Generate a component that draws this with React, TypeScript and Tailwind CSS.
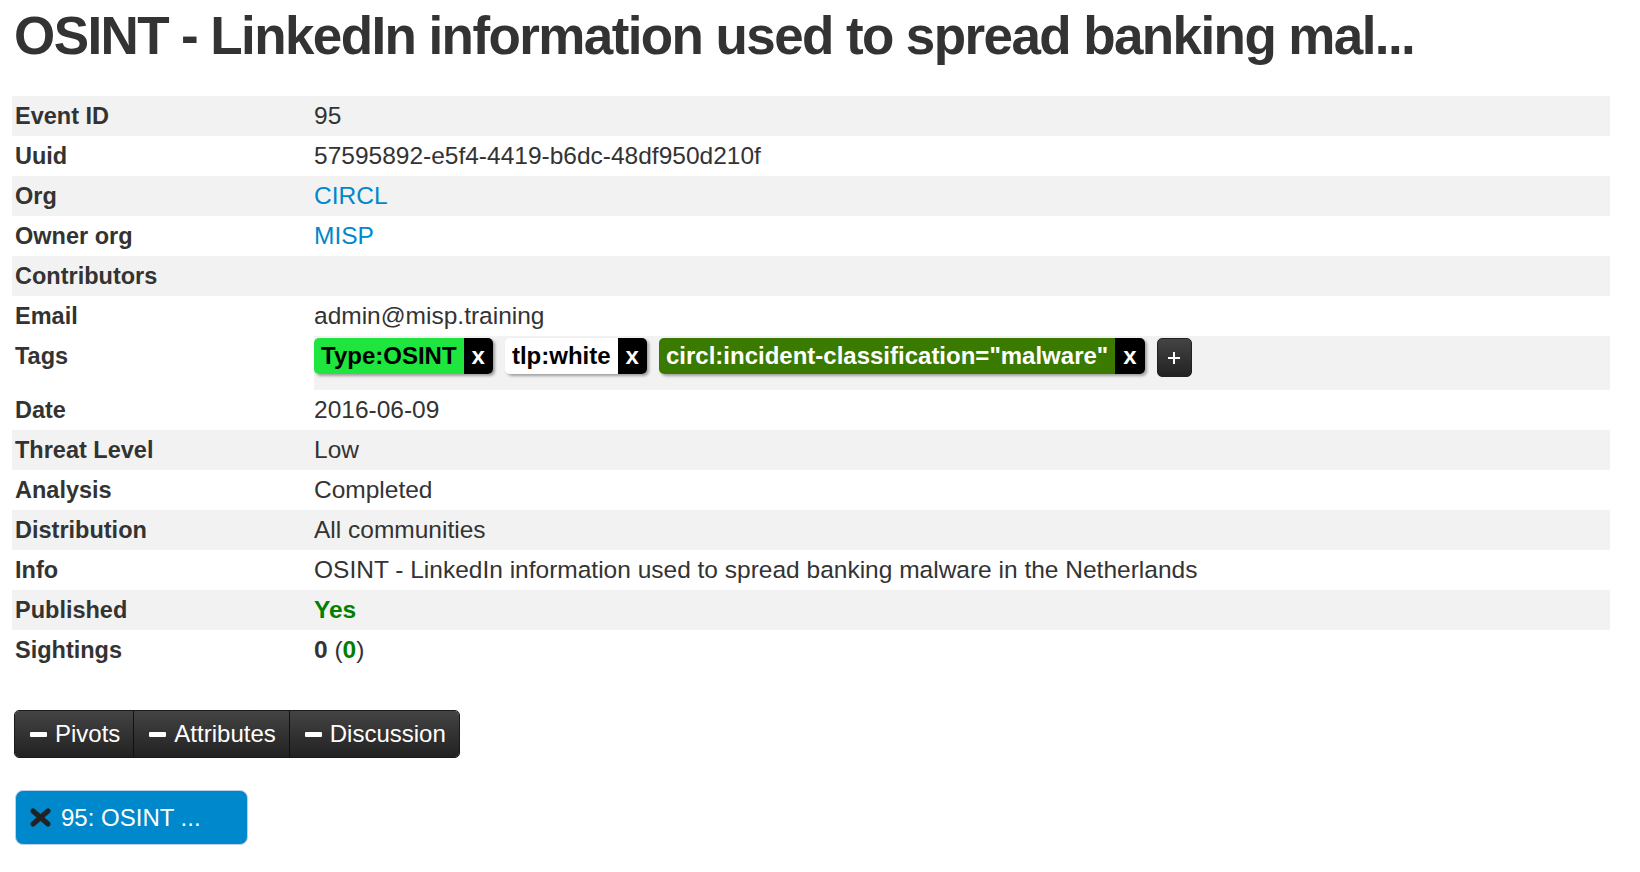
import React from "react";

const rows: { label: string; value: React.ReactNode }[] = [
  { label: "Event ID", value: "95" },
  { label: "Uuid", value: "57595892-e5f4-4419-b6dc-48df950d210f" },
  { label: "Org", value: <span className="text-[#0088cc]">CIRCL</span> },
  { label: "Owner org", value: <span className="text-[#0088cc]">MISP</span> },
  { label: "Contributors", value: "" },
  { label: "Email", value: "admin@misp.training" },
  { label: "Tags", value: null },
  { label: "Date", value: "2016-06-09" },
  { label: "Threat Level", value: "Low" },
  { label: "Analysis", value: "Completed" },
  { label: "Distribution", value: "All communities" },
  { label: "Info", value: "OSINT - LinkedIn information used to spread banking malware in the Netherlands" },
  { label: "Published", value: <span className="font-bold text-[#008000]">Yes</span> },
  {
    label: "Sightings",
    value: (
      <span>
        <span className="font-bold">0</span> (<span className="font-bold text-[#008000]">0</span>)
      </span>
    ),
  },
];

function Tag({ name, bg, fg }: { name: string; bg: string; fg: string }) {
  return (
    <span className="inline-flex h-[36px] rounded-[5px] shadow-[2px_2px_3px_rgba(0,0,0,0.35)] text-[24px] font-bold leading-[36px]">
      <span className={`px-[7px] rounded-l-[5px] ${bg} ${fg}`}>{name}</span>
      <span className="px-[8px] rounded-r-[5px] bg-black text-white">x</span>
    </span>
  );
}

function Tags() {
  return (
    <div className="flex items-start gap-[12px] pt-[2px] pb-[13px]">
      <Tag name="Type:OSINT" bg="bg-[#1fe63f]" fg="text-black" />
      <Tag name="tlp:white" bg="bg-white" fg="text-black" />
      <Tag name={'circl:incident-classification="malware"'} bg="bg-[#3a7a00]" fg="text-white" />
      <button className="flex h-[39px] w-[35px] items-center justify-center rounded-[5px] border border-[#222] bg-gradient-to-b from-[#444] to-[#222] text-white">
        <svg width="14" height="14" viewBox="0 0 14 14">
          <path d="M7 1v12M1 7h12" stroke="#fff" strokeWidth="2" />
        </svg>
      </button>
    </div>
  );
}

function Minus() {
  return <span className="inline-block h-[5px] w-[17px] rounded-[1px] bg-white" />;
}

export default function App() {
  return (
    <div className="min-h-[872px] bg-white px-3 font-['Liberation_Sans',Arial,sans-serif] text-[#333]">
      <h2 className="ml-[2px] pt-[9px] text-[53px] font-bold leading-[53px] tracking-[-1.6px] text-[#333]">
        OSINT - LinkedIn information used to spread banking mal...
      </h2>

      <div className="mt-[34px] w-[1598px]">
        {rows.map((r, i) => {
          const tags = r.label === "Tags";
          const stripe = i % 2 === 0 ? "bg-[#f2f2f2]" : "bg-white";
          return (
            <div key={r.label} className={`flex items-stretch ${tags ? "bg-white" : stripe}`}>
              <div className="w-[302px] shrink-0 pl-[3px] text-[23.5px] font-bold leading-[40px]">{r.label}</div>
              <div className={`flex-1 text-[24.5px] leading-[40px] ${tags ? stripe : ""}`}>
                {tags ? <Tags /> : r.value}
              </div>
            </div>
          );
        })}
      </div>

      <div className="ml-[2px] mt-[40px] inline-flex h-[48px] overflow-hidden rounded-[5px] border border-[#1a1a1a] text-[24px] text-white">
        <div className="flex items-center gap-[8px] bg-gradient-to-b from-[#444] to-[#222] pl-[15px] pr-[13px]">
          <Minus />
          Pivots
        </div>
        <div className="flex items-center gap-[8px] border-l border-[#111] bg-gradient-to-b from-[#444] to-[#222] pl-[15px] pr-[13px]">
          <Minus />
          Attributes
        </div>
        <div className="flex items-center gap-[8px] border-l border-[#111] bg-gradient-to-b from-[#444] to-[#222] pl-[15px] pr-[13px]">
          <Minus />
          Discussion
        </div>
      </div>

      <div className="ml-[3px] mt-[32px]">
        <div className="inline-flex h-[55px] w-[233px] items-center gap-[10px] rounded-[8px] border border-[#b8d3e8] bg-[#0088cc] pl-[14px] text-[24px] text-white">
          <svg width="21" height="19" viewBox="0 0 21 19">
            <path d="M3 3l15 13M18 3L3 16" stroke="#222" strokeWidth="5" strokeLinecap="round" />
          </svg>
          95: OSINT ...
        </div>
      </div>
    </div>
  );
}
